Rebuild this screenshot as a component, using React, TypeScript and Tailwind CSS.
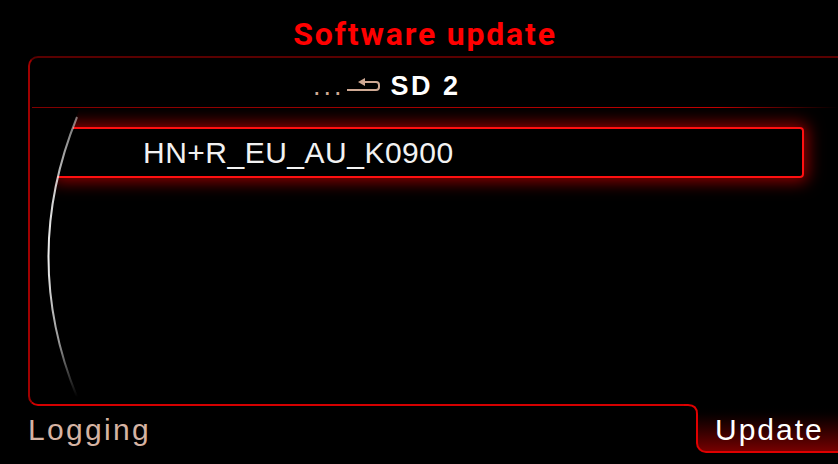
import React from "react";

function BackArrow() {
  return (
    <svg width="36" height="16" viewBox="0 0 36 16" className="block">
      <path
        d="M1 13 H30 Q33 13 33 10 V8 Q33 5 30 5 H17"
        fill="none"
        stroke="#cfa994"
        strokeWidth="2"
        strokeLinejoin="round"
      />
      <path d="M12 5 L19 1 L19 9 Z" fill="#cfa994" />
    </svg>
  );
}

function ScrollArc() {
  return (
    <svg
      className="absolute left-0 top-0 overflow-visible pointer-events-none"
      width="60"
      height="348"
      viewBox="0 0 60 348"
    >
      <defs>
        <linearGradient id="arcg" x1="0" y1="59" x2="0" y2="339" gradientUnits="userSpaceOnUse">
          <stop offset="0" stopColor="#ffffff" stopOpacity="0.45" />
          <stop offset="0.25" stopColor="#ffffff" stopOpacity="0.8" />
          <stop offset="0.5" stopColor="#ffffff" stopOpacity="0.95" />
          <stop offset="0.8" stopColor="#ffffff" stopOpacity="0.6" />
          <stop offset="1" stopColor="#ffffff" stopOpacity="0" />
        </linearGradient>
      </defs>
      <path d="M47 59 Q-10 199 47 339" fill="none" stroke="url(#arcg)" strokeWidth="2" />
    </svg>
  );
}

function TabCorner() {
  return (
    <svg
      className="absolute left-[-14px] top-0 overflow-visible"
      width="16"
      height="14"
      viewBox="0 0 16 14"
    >
      <rect x="3" y="0" width="13" height="11" fill="#000" />
      <path d="M0 1 H4 Q13 1 13 10 V14" fill="none" stroke="#e00000" strokeWidth="2" />
    </svg>
  );
}

export default function App() {
  return (
    <div className="w-[838px] h-[464px] bg-black overflow-hidden flex flex-col font-['Liberation_Sans',Arial,sans-serif]">
      <div className="h-[56px] pt-[16px] pl-[12px] flex justify-center">
        <span className="font-['Roboto',sans-serif] font-bold text-[32px] leading-[36px] tracking-[1.8px] text-[#ff0000]">
          Software update
        </span>
      </div>

      <div className="relative ml-[28px] h-[350px] border-t-2 border-l-2 border-b-2 border-t-[#5a0000] border-l-[#a00000] border-b-[#d40000] rounded-tl-[10px] rounded-bl-[10px] flex flex-col">
        <div className="h-[49px] pt-[6px] pl-[283px] flex items-center">
          <span className="text-[27px] leading-[36px] tracking-[3px] text-[#cfa994]">...</span>
          <span className="ml-[1px] mt-[-2px]">
            <BackArrow />
          </span>
          <span className="ml-[9px] font-bold text-[27px] leading-[36px] tracking-[2.5px] text-white">SD 2</span>
        </div>
        <div className="h-px ml-[2px] bg-gradient-to-r from-[#800000] via-[#c00000] via-85% to-transparent" />

        <div className="pt-[19px] pl-[27px] pr-[34px]">
          <div className="h-[51px] border-t-2 border-b-2 border-r-2 border-[#ff1010] rounded-r-[4px] shadow-[0_0_16px_4px_rgba(255,0,0,0.55)] pl-[86px] flex items-center [clip-path:polygon(26px_-30px,calc(100%+30px)_-30px,calc(100%+30px)_calc(100%+30px),-10px_calc(100%+30px))]">
            <span className="text-[30px] leading-[47px] tracking-[0.5px] text-[#f2f2f2]">HN+R_EU_AU_K0900</span>
          </div>
        </div>

        <ScrollArc />
      </div>

      <div className="flex items-start justify-between">
        <div className="pl-[28px] pt-[6px] text-[30px] leading-[36px] tracking-[2.3px] text-[#d5b3a3]">Logging</div>
        <div className="relative w-[142px] h-[49px] -mt-[2px] border-l-2 border-b-2 border-[#e00000] rounded-bl-[10px] bg-gradient-to-b from-black to-[#760000] pl-[17px] pt-[8px]">
          <TabCorner />
          <span className="text-[30px] leading-[36px] tracking-[2px] text-white">Update</span>
        </div>
      </div>
    </div>
  );
}
